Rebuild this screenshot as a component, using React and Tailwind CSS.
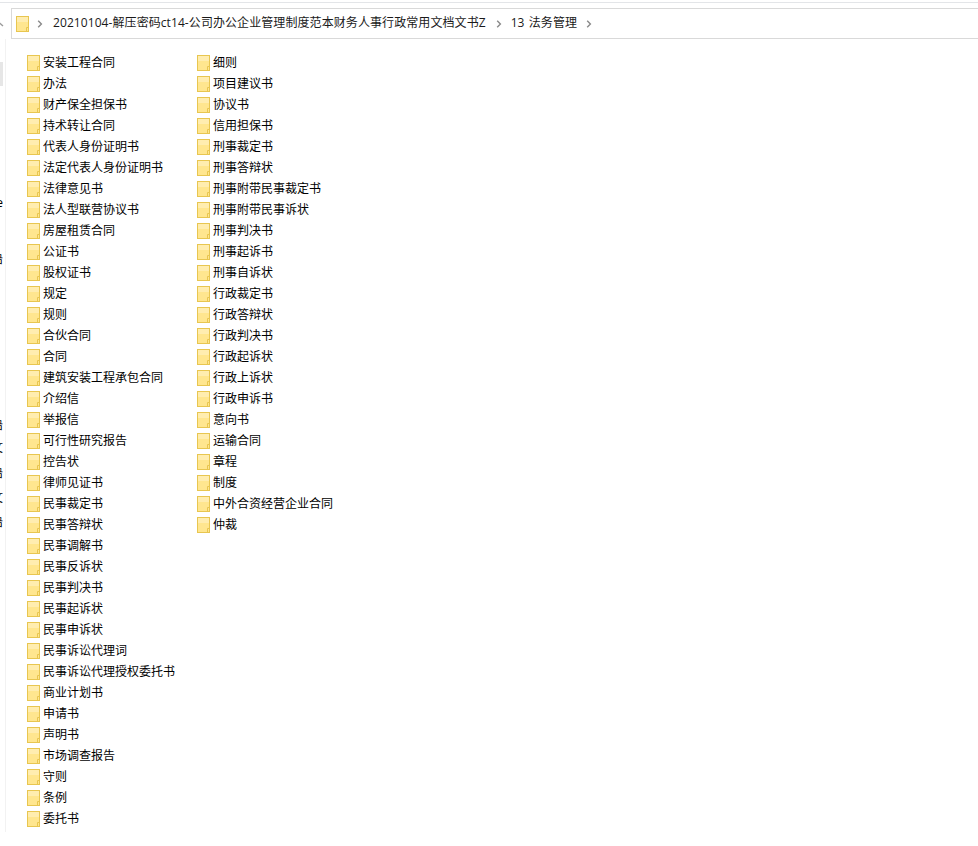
import React from 'react';

const firstColumn = [
  '安装工程合同', '办法', '财产保全担保书', '持术转让合同', '代表人身份证明书', '法定代表人身份证明书',
  '法律意见书', '法人型联营协议书', '房屋租赁合同', '公证书', '股权证书', '规定', '规则', '合伙合同', '合同',
  '建筑安装工程承包合同', '介绍信', '举报信', '可行性研究报告', '控告状', '律师见证书', '民事裁定书', '民事答辩状',
  '民事调解书', '民事反诉状', '民事判决书', '民事起诉状', '民事申诉状', '民事诉讼代理词', '民事诉讼代理授权委托书',
  '商业计划书', '申请书', '声明书', '市场调查报告', '守则', '条例', '委托书',
];

const secondColumn = [
  '细则', '项目建议书', '协议书', '信用担保书', '刑事裁定书', '刑事答辩状', '刑事附带民事裁定书', '刑事附带民事诉状',
  '刑事判决书', '刑事起诉书', '刑事自诉状', '行政裁定书', '行政答辩状', '行政判决书', '行政起诉状', '行政上诉状',
  '行政申诉书', '意向书', '运输合同', '章程', '制度', '中外合资经营企业合同', '仲裁',
];

// bits of the window behind that stick out at the left edge
const clippedGlyphs = [
  { text: 'e', className: 'mt-[111px]' },
  { text: '语', className: 'mt-[44px]' },
  { text: '语', className: 'mt-[154px]' },
  { text: '文', className: 'mt-[11px]' },
  { text: '语', className: 'mt-[13px]' },
  { text: '文', className: 'mt-[13px]' },
  { text: '语', className: 'mt-[12px]' },
];

function FolderIcon({ className }) {
  return (
    <svg className={className} width="13" height="16" viewBox="0 0 13 16" fill="none">
      <rect x="0.5" y="0.5" width="12" height="15" fill="#ffe68f" stroke="#e8c650" />
      <rect x="1" y="1" width="11" height="5" fill="#ffedb0" />
      <path d="M10.5 15V11.5H12.5" stroke="#e8c650" />
    </svg>
  );
}

function Chevron() {
  return (
    <svg width="6" height="8" viewBox="0 0 6 8" fill="none" className="shrink-0">
      <path d="M1.2 0.8L4.4 4L1.2 7.2" stroke="#8a8a8a" strokeWidth="1.4" />
    </svg>
  );
}

function FolderRow({ name }) {
  return (
    <div className="flex h-[21px] items-center">
      <FolderIcon className="shrink-0" />
      <span className="ml-[3px] whitespace-nowrap text-[12px] leading-[21px] text-black">{name}</span>
    </div>
  );
}

export default function App() {
  return (
    <div className="flex h-[846px] w-[978px] flex-col overflow-hidden bg-white font-['Open_Sans','Noto_Sans_CJK_SC',sans-serif]">
      <div className="mt-[2px] h-[1px] bg-[#e3e5e8]" />
      <div className="mt-[5px] flex h-[31px] items-center">
        <svg width="4" height="6" viewBox="0 0 4 6" fill="none" className="w-[4px] shrink-0">
          <path d="M-1 1.5L3 5" stroke="#9a9a9a" strokeWidth="1.4" />
        </svg>
        <div className="ml-[7px] flex h-full flex-1 items-center border-y border-l border-[#d9d9d9] pl-[4px] text-[12px] tracking-[0.08px] text-[#1a1a1a]">
          <FolderIcon />
          <div className="ml-[8px]"><Chevron /></div>
          <span className="ml-[10px] whitespace-nowrap pb-[2px]">20210104-解压密码ct14-公司办公企业管理制度范本财务人事行政常用文档文书Z</span>
          <div className="ml-[10px]"><Chevron /></div>
          <span className="ml-[9px] whitespace-nowrap pb-[2px] [word-spacing:1px]">13 法务管理</span>
          <div className="ml-[9px]"><Chevron /></div>
        </div>
      </div>
      <div className="flex">
        <div className="h-[793px] w-[6px] border-r border-[#f2f2f2] pt-[23px]">
          <div className="h-[24px] w-[3px] bg-[#e6e6e6]" />
          {clippedGlyphs.map((glyph, i) => (
            <div key={i} className={`flex h-[12px] w-[3px] justify-end overflow-hidden text-[12px] leading-[12px] text-black ${glyph.className}`}>
              <span className="shrink-0">{glyph.text}</span>
            </div>
          ))}
        </div>
        <div className="flex pt-[13px] pl-[21px]">
          <div className="w-[170px]">
            {firstColumn.map((name) => <FolderRow key={name} name={name} />)}
          </div>
          <div className="w-[170px]">
            {secondColumn.map((name) => <FolderRow key={name} name={name} />)}
          </div>
        </div>
      </div>
    </div>
  );
}
